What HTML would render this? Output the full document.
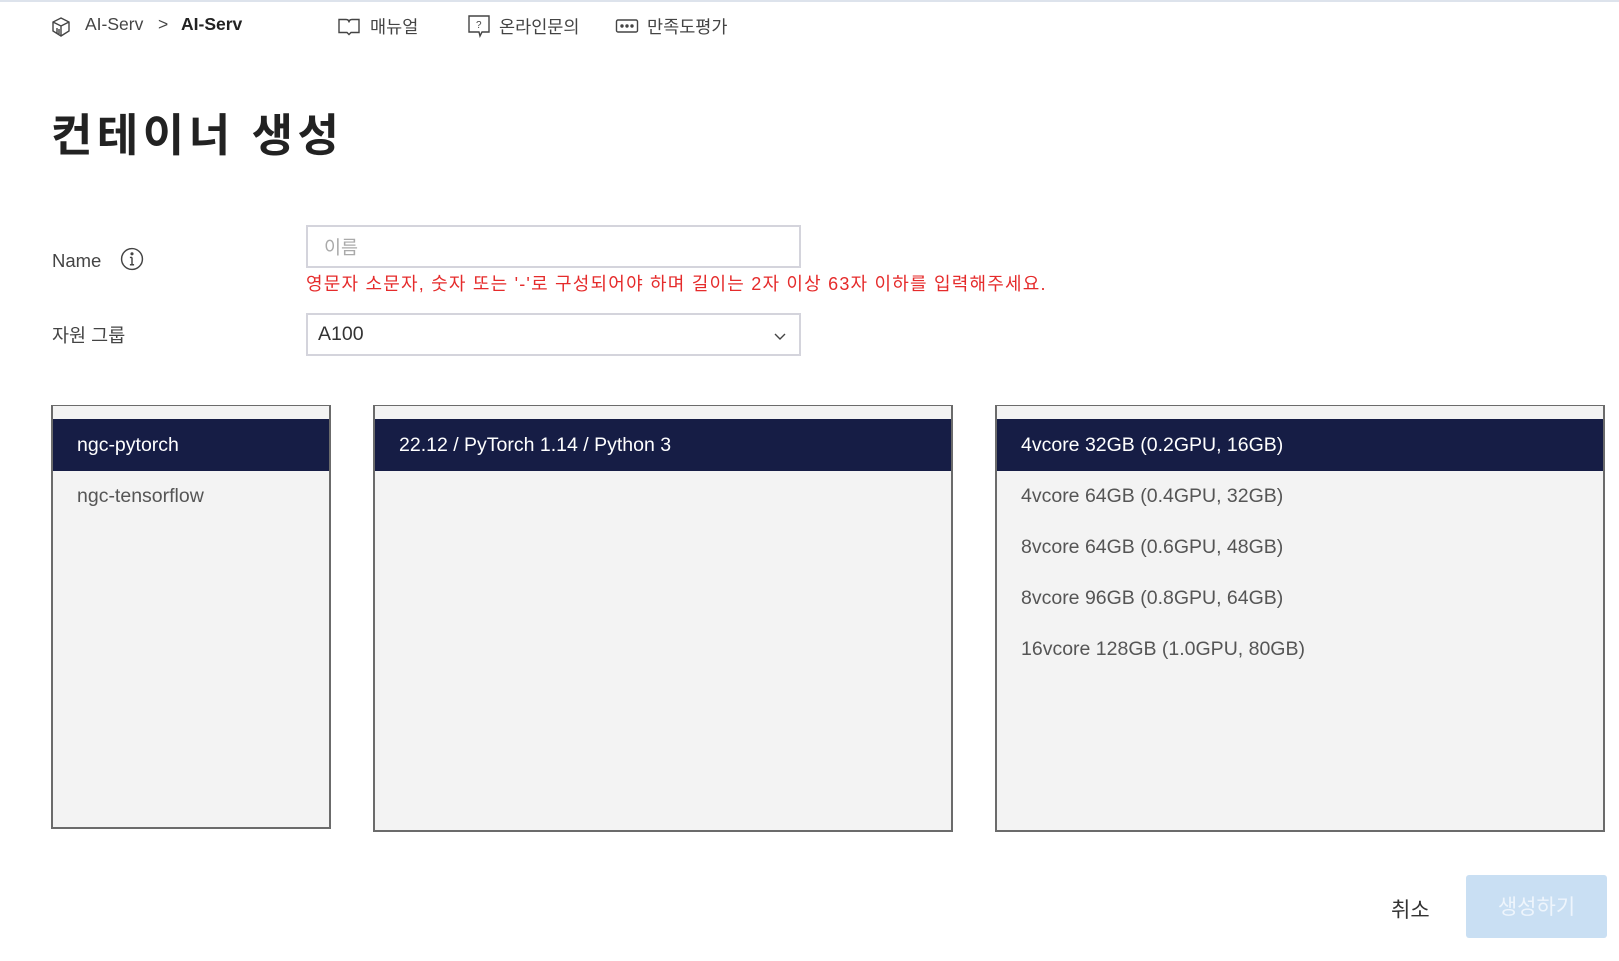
<!DOCTYPE html>
<html><head><meta charset="utf-8"><style>
*{margin:0;padding:0;box-sizing:border-box}
body{width:1619px;height:961px;background:#fff;font-family:"Liberation Sans","Noto Sans CJK KR",sans-serif;color:#333;position:relative;overflow:hidden}
.topline{position:absolute;left:0;top:0;width:1619px;height:2px;background:#dde3ec}
.a{position:absolute;white-space:nowrap}
.nav{font-size:17.5px;color:#444;top:14px}
.panel{position:absolute;background:#f3f3f3;border:2px solid #6b6b6b;border-top-width:1px;overflow:hidden}
.sel{position:absolute;left:0;right:0;top:13px;height:52px;background:#161d45;color:#fff;font-size:19.5px;line-height:52px;padding-left:24px}
.it{position:absolute;left:24px;font-size:19.5px;color:#555}
</style></head><body>
<div class="topline"></div>
<svg class="a" style="left:50px;top:16px" width="22" height="22" viewBox="0 0 22 22" fill="none" stroke="#444" stroke-width="1.4"><path d="M11 2 L19 6 L19 15 L11 20 L3 15 L3 6 Z M3 6 L11 10 L19 6 M11 10 L11 20 M7 12 L7 17 M9 13 L9 18"/></svg>
<div class="a nav" style="left:85px">AI-Serv</div>
<div class="a nav" style="left:158px">&gt;</div>
<div class="a nav" style="left:181px;font-weight:bold;color:#222">AI-Serv</div>
<svg class="a" style="left:337px;top:16px" width="24" height="21" viewBox="0 0 24 20" fill="none" stroke="#444" stroke-width="1.4"><path d="M2 3 L9 3 Q12 3 12 6 Q12 3 15 3 L22 3 L22 16 L14 16 L12 18 L10 16 L2 16 Z"/></svg>
<div class="a nav" style="left:370px">매뉴얼</div>
<svg class="a" style="left:467px;top:14px" width="24" height="24" viewBox="0 0 24 24" fill="none" stroke="#444" stroke-width="1.4"><path d="M2 2 H22 V18 H15 L13 22 L12 18 H2 Z"/><text x="9" y="14" font-size="10" fill="#444" stroke="none">?</text></svg>
<div class="a nav" style="left:499px">온라인문의</div>
<svg class="a" style="left:615px;top:18px" width="24" height="16" viewBox="0 0 24 16" fill="none" stroke="#444" stroke-width="1.4"><rect x="1.5" y="2" width="21" height="12" rx="1.5"/><circle cx="7" cy="8" r="1" fill="#444"/><circle cx="12" cy="8" r="1" fill="#444"/><circle cx="17" cy="8" r="1" fill="#444"/></svg>
<div class="a nav" style="left:647px">만족도평가</div>

<div class="a" style="left:51px;top:99px;font-size:45px;font-weight:bold;color:#222;letter-spacing:4.5px">컨테이너 생성</div>

<div class="a" style="left:52px;top:250px;font-size:18.5px;color:#444">Name</div>
<svg class="a" style="left:120px;top:247px" width="24" height="24" viewBox="0 0 23 23" fill="none" stroke="#444" stroke-width="1.4"><circle cx="11.5" cy="11.5" r="10"/><path d="M11.5 10 V17 M9.5 17 H13.5 M9.5 10 H11.5"/><circle cx="11.5" cy="6.5" r="0.8" fill="#444"/></svg>
<div class="a" style="left:306px;top:225px;width:495px;height:43px;border:2px solid #d4d4dc"></div>
<div class="a" style="left:324px;top:234px;font-size:18.5px;color:#aaa">이름</div>
<div class="a" style="left:306px;top:270px;font-size:18px;color:#e52b2b;letter-spacing:1.2px">영문자 소문자, 숫자 또는 '-'로 구성되어야 하며 길이는 2자 이상 63자 이하를 입력해주세요.</div>

<div class="a" style="left:52px;top:322px;font-size:18.5px;color:#444">자원 그룹</div>
<div class="a" style="left:306px;top:313px;width:495px;height:43px;border:2px solid #d4d4dc"></div>
<div class="a" style="left:318px;top:323px;font-size:19.5px;color:#333">A100</div>
<svg class="a" style="left:773px;top:331px" width="14" height="10" viewBox="0 0 14 10" fill="none" stroke="#444" stroke-width="1.4"><path d="M2 3 L7 8 L12 3"/></svg>

<div class="panel" style="left:51px;top:405px;width:280px;height:424px">
<div class="sel">ngc-pytorch</div>
<div class="it" style="top:79px">ngc-tensorflow</div>
</div>
<div class="panel" style="left:373px;top:405px;width:580px;height:427px">
<div class="sel">22.12 / PyTorch 1.14 / Python 3</div>
</div>
<div class="panel" style="left:995px;top:405px;width:610px;height:427px">
<div class="sel">4vcore 32GB (0.2GPU, 16GB)</div>
<div class="it" style="top:79px">4vcore 64GB (0.4GPU, 32GB)</div>
<div class="it" style="top:130px">8vcore 64GB (0.6GPU, 48GB)</div>
<div class="it" style="top:181px">8vcore 96GB (0.8GPU, 64GB)</div>
<div class="it" style="top:232px">16vcore 128GB (1.0GPU, 80GB)</div>
</div>

<div class="a" style="left:1391px;top:894px;font-size:21px;color:#333">취소</div>
<div class="a" style="left:1466px;top:875px;width:141px;height:63px;background:#c9dff3;border-radius:3px;color:#eef5fc;font-size:21px;line-height:65px;text-align:center">생성하기</div>
</body></html>
